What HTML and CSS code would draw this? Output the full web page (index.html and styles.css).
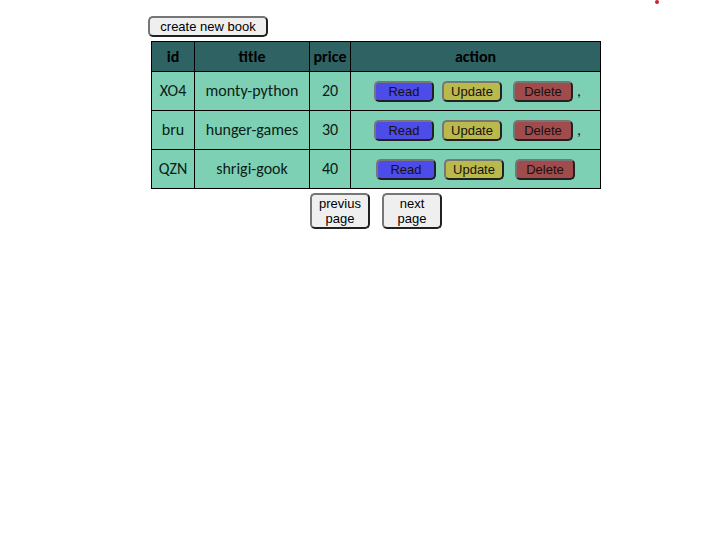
FILE: index.html
```html
<!DOCTYPE html>
<html lang="en">
<head>
<meta charset="utf-8">
<title>Books</title>
<link rel="stylesheet" href="styles.css">
</head>
<body>
<span class="marker"></span>
<main class="books">
  <button class="btn btn-create" type="button">create new book</button>
  <table class="book-table">
    <colgroup><col class="col-id"><col class="col-title"><col class="col-price"><col></colgroup>
    <thead>
      <tr><th>id</th><th>title</th><th>price</th><th>action</th></tr>
    </thead>
    <tbody>
      <tr>
        <td>XO4</td><td>monty-python</td><td>20</td>
        <td><div class="actions"><button class="btn btn-read" type="button">Read</button><button class="btn btn-update" type="button">Update</button><button class="btn btn-delete" type="button">Delete</button><span>,</span></div></td>
      </tr>
      <tr>
        <td>bru</td><td>hunger-games</td><td>30</td>
        <td><div class="actions"><button class="btn btn-read" type="button">Read</button><button class="btn btn-update" type="button">Update</button><button class="btn btn-delete" type="button">Delete</button><span>,</span></div></td>
      </tr>
      <tr>
        <td>QZN</td><td>shrigi-gook</td><td>40</td>
        <td><div class="actions"><button class="btn btn-read" type="button">Read</button><button class="btn btn-update" type="button">Update</button><button class="btn btn-delete" type="button">Delete</button></div></td>
      </tr>
    </tbody>
  </table>
  <nav class="pager">
    <button class="btn" type="button">previus page</button>
    <button class="btn" type="button">next page</button>
  </nav>
</main>
</body>
</html>
```
FILE: styles.css
```css
* {
  box-sizing: border-box;
}

body {
  margin: 0;
  padding: 16px 0 0 26px;
  background: #fff;
  color: #000;
  font: 16px/20px Carlito, Calibri, Lato, sans-serif;
}

.marker {
  position: absolute;
  top: 0;
  right: 67px;
  width: 4px;
  height: 4px;
  border-radius: 50%;
  background: #d02030;
}

.books {
  display: flex;
  flex-direction: column;
  max-width: 456px;
  margin: 0 auto;
}

.btn {
  width: 60px;
  margin: 0 4px;
  padding: 1px 6px;
  border: 2px solid;
  border-color: #767676 #212121 #212121 #767676;
  border-radius: 5px;
  background: #efefef;
  color: #000;
  font: 13px/15px "Liberation Sans", Arial, sans-serif;
}

.btn-create {
  width: 120px;
  margin: 0 0 4px;
}

.book-table {
  width: calc(100% - 6px);
  margin: 0 3px;
  table-layout: fixed;
  border-collapse: collapse;
  background: #7dd0b4;
  text-align: center;
}

.col-id {
  width: 43px;
}

.col-title {
  width: 115px;
}

.col-price {
  width: 41px;
}

th,
td {
  height: 39px;
  padding: 0;
  border: 1px solid #000;
}

td {
  color: #0c1c16;
}

th {
  height: 30px;
  background: #2f6262;
}

.actions {
  display: flex;
  align-items: center;
  justify-content: center;
}

.actions .btn {
  padding: 1px 0;
  color: #1a1010;
}

.actions .btn-read {
  background: #4c4ce8;
}

.actions .btn-update {
  background: #b9b94c;
}

.actions .btn-delete {
  margin-left: 7px;
  background: #a04c4c;
}

.pager {
  display: flex;
  justify-content: center;
  gap: 4px;
  margin-top: 4px;
}
```
